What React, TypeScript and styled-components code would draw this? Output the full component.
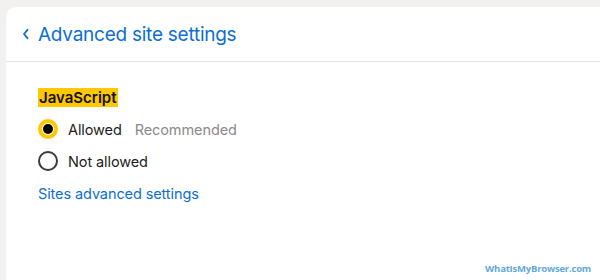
import React, { useState } from "react";
import styled, { createGlobalStyle } from "styled-components";

const GlobalStyle = createGlobalStyle`
  html, body {
    margin: 0;
    padding: 0;
    background: #f2f1ef;
    font-family: Inter, "Noto Sans", sans-serif;
  }
  * { box-sizing: border-box; }
`;

const Page = styled.div`
  width: 600px;
  height: 280px;
  padding: 7px 0 0 6px;
  position: relative;
  overflow: hidden;
`;

const Card = styled.div`
  background: #fff;
  height: 100%;
  border-top-left-radius: 10px;
`;

const Header = styled.div`
  height: 55px;
  display: flex;
  align-items: center;
  padding-left: 14px;
  border-bottom: 1px solid #e4e4e4;
  color: #0b6fd3;
`;

const BackButton = styled.button`
  border: 0;
  background: none;
  padding: 0;
  width: 12px;
  height: 16px;
  display: flex;
  align-items: center;
  justify-content: center;
  cursor: pointer;
`;

const Title = styled.h1`
  margin: 0 0 0 6px;
  font-size: 19px;
  font-weight: 400;
  letter-spacing: -0.25px;
  color: #0b6fd3;
`;

const Content = styled.div`
  padding: 26px 32px 0;
  display: flex;
  flex-direction: column;
  align-items: flex-start;
`;

const SectionLabel = styled.span`
  background: #ffc800;
  color: #111;
  font-size: 15px;
  font-weight: 600;
  line-height: 19px;
  padding: 0 1px;
  margin-bottom: 6px;
`;

const OptionRow = styled.label`
  display: flex;
  align-items: center;
  height: 32px;
  font-size: 14.5px;
  letter-spacing: -0.1px;
  color: #222;
  cursor: pointer;
`;

const Radio = styled.span<{ $checked: boolean }>`
  width: 20px;
  height: 20px;
  border-radius: 50%;
  margin-right: 10px;
  display: flex;
  align-items: center;
  justify-content: center;
  background: #fff;
  border: ${(p) => (p.$checked ? "4px solid #ffc800" : "2px solid #3a3a3a")};

  &::after {
    content: "";
    display: ${(p) => (p.$checked ? "block" : "none")};
    width: 10px;
    height: 10px;
    border-radius: 50%;
    background: #000;
  }
`;

const Hint = styled.span`
  color: #8a8a8a;
  margin-left: 13px;
`;

const Link = styled.a`
  margin-top: 8px;
  font-size: 14.5px;
  letter-spacing: -0.1px;
  color: #0b6fd3;
  text-decoration: none;
  cursor: pointer;
`;

const Watermark = styled.div`
  position: absolute;
  right: 9px;
  bottom: 5px;
  font-family: "Open Sans", sans-serif;
  font-weight: 700;
  font-size: 9.5px;
  letter-spacing: -0.2px;
  color: #62a8de;
`;

const options = [
  { id: "allowed", label: "Allowed", hint: "Recommended" },
  { id: "blocked", label: "Not allowed" },
];

export default function App() {
  const [value, setValue] = useState("allowed");

  return (
    <Page>
      <GlobalStyle />
      <Card>
        <Header>
          <BackButton aria-label="Back">
            <svg width="8" height="12" viewBox="0 0 8 12">
              <path d="M5.5 1.8 L2 6 L5.5 10.2" fill="none" stroke="#0b6fd3" strokeWidth="1.8" strokeLinecap="round" strokeLinejoin="round" />
            </svg>
          </BackButton>
          <Title>Advanced site settings</Title>
        </Header>
        <Content>
          <SectionLabel>JavaScript</SectionLabel>
          {options.map((o) => (
            <OptionRow key={o.id} onClick={() => setValue(o.id)}>
              <Radio $checked={value === o.id} />
              {o.label}
              {o.hint && <Hint>{o.hint}</Hint>}
            </OptionRow>
          ))}
          <Link>Sites advanced settings</Link>
        </Content>
      </Card>
      <Watermark>WhatIsMyBrowser.com</Watermark>
    </Page>
  );
}
